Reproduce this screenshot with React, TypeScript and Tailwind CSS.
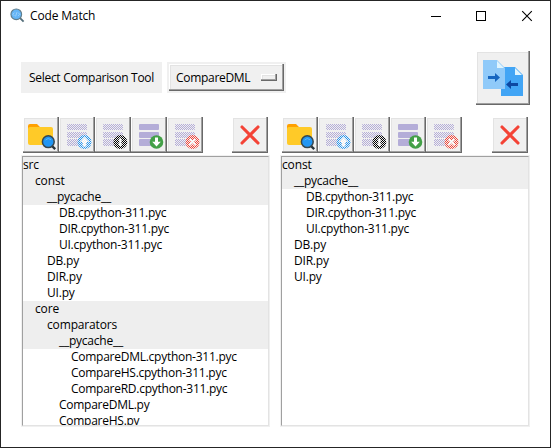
import type { ReactNode } from "react";

const raised =
  "shrink-0 bg-[#f0f0f0] border-r border-b border-[#696969] shadow-[inset_-1px_-1px_0_#a0a0a0,inset_1px_1px_0_#fff,inset_2px_2px_0_#e3e3e3]";

function ToolButton({ children, disabled }: { children: ReactNode; disabled?: boolean }) {
  return (
    <button className={`${raised} block h-9 w-9 overflow-hidden`}>
      <svg width="35" height="35" viewBox="0 0 35 35" className="block">
        {children}
        {disabled && <rect x="4" y="4" width="29" height="29" fill="url(#stipple)" />}
      </svg>
    </button>
  );
}

function Bars() {
  return (
    <g fill="#b4add8">
      <rect x="8" y="7" width="20" height="6" rx="1" />
      <rect x="8" y="15" width="20" height="6" rx="1" />
      <rect x="8" y="22" width="20" height="7" rx="1" />
    </g>
  );
}

function FolderIcon() {
  return (
    <>
      <path d="M5 9q0-2 2-2h7l3 3h10v6H5z" fill="#ffa000" />
      <path d="M5 12q0-2 2-2h21q2 0 2 2V26q0 2-2 2H7q-2 0-2-2z" fill="#ffca28" />
      <path d="M29 29l3.2 3.2" stroke="#263238" strokeWidth="2.4" />
      <circle cx="25.3" cy="24.7" r="5.9" fill="#2196f3" stroke="#37474f" strokeWidth="1.5" />
      <path d="M22.5 23a4 4 0 0 1 5.5-.3" stroke="#64b5f6" strokeWidth="1" fill="none" />
    </>
  );
}

function CloseIcon() {
  return <path d="M10 10l16 16M26 10L10 26" stroke="#f44336" strokeWidth="3.1" strokeLinecap="round" />;
}

function Toolbar() {
  return (
    <div className="flex h-9 pl-0.5">
      <ToolButton><FolderIcon /></ToolButton>
      <ToolButton disabled>
        <Bars />
        <circle cx="25.5" cy="25" r="7" fill="#2196f3" />
        <path d="M25.5 20l4.5 5h-2.7v4.5h-3.6V25H21z" fill="#fff" />
      </ToolButton>
      <ToolButton disabled>
        <Bars />
        <circle cx="25.3" cy="25" r="7" fill="#000" />
        <path d="M25.3 20.5l2.2 3h-1.2v3h1.2l-2.2 3-2.2-3h1.2v-3h-1.2z" fill="#fff" />
      </ToolButton>
      <ToolButton>
        <Bars />
        <circle cx="25.5" cy="25" r="6.8" fill="#43a047" />
        <path d="M24 20.5h3v4.2h2.8L25.5 29.5l-4.3-4.8H24z" fill="#fff" />
      </ToolButton>
      <ToolButton disabled>
        <Bars />
        <circle cx="25.5" cy="25" r="7" fill="#f44336" />
        <path d="M22.5 22l6 6M28.5 22l-6 6" stroke="#fff" strokeWidth="2" />
      </ToolButton>
      <div className="mr-0.5 ml-auto"><ToolButton><CloseIcon /></ToolButton></div>
    </div>
  );
}

type Row = { text: string; depth: number; dir?: boolean };

const leftRows: Row[] = [
  { text: "src", depth: 0, dir: true },
  { text: "const", depth: 1, dir: true },
  { text: "__pycache__", depth: 2, dir: true },
  { text: "DB.cpython-311.pyc", depth: 3 },
  { text: "DIR.cpython-311.pyc", depth: 3 },
  { text: "UI.cpython-311.pyc", depth: 3 },
  { text: "DB.py", depth: 2 },
  { text: "DIR.py", depth: 2 },
  { text: "UI.py", depth: 2 },
  { text: "core", depth: 1, dir: true },
  { text: "comparators", depth: 2, dir: true },
  { text: "__pycache__", depth: 3, dir: true },
  { text: "CompareDML.cpython-311.pyc", depth: 4 },
  { text: "CompareHS.cpython-311.pyc", depth: 4 },
  { text: "CompareRD.cpython-311.pyc", depth: 4 },
  { text: "CompareDML.py", depth: 3 },
  { text: "CompareHS.py", depth: 3 },
];

const rightRows: Row[] = [
  { text: "const", depth: 0, dir: true },
  { text: "__pycache__", depth: 1, dir: true },
  { text: "DB.cpython-311.pyc", depth: 2 },
  { text: "DIR.cpython-311.pyc", depth: 2 },
  { text: "UI.cpython-311.pyc", depth: 2 },
  { text: "DB.py", depth: 1 },
  { text: "DIR.py", depth: 1 },
  { text: "UI.py", depth: 1 },
];

const indent = ["pl-0", "pl-3", "pl-6", "pl-9", "pl-12"];

function tracking(text: string) {
  if (text.startsWith("Compare")) return "tracking-[-0.26px]";
  if (text.endsWith(".pyc")) return "tracking-[-0.24px]";
  if (text.endsWith(".py")) return "tracking-[-0.2px]";
  if (text === "__pycache__") return "tracking-[-0.25px]";
  return "tracking-[-0.15px]";
}

function Tree({ rows }: { rows: Row[] }) {
  return (
    <div className="mt-0.5 h-[272px] border border-[#f0f0f0]">
      <div className="h-full overflow-hidden border border-t-[#a0a0a0] border-r-[#e3e3e3] border-b-[#e3e3e3] border-l-[#a0a0a0]">
        {rows.map((r, i) => (
          <div
            key={i}
            className={`h-4 leading-4 whitespace-nowrap ${indent[r.depth]} ${r.dir ? "bg-[#eeeeee]" : "bg-white"} ${tracking(r.text)}`}
          >
            {r.text}
          </div>
        ))}
      </div>
    </div>
  );
}

export default function App() {
  return (
    <div className="flex h-[448px] w-[551px] flex-col overflow-hidden border border-[#252525] bg-white font-['Open_Sans','Noto_Sans',sans-serif] text-[12px] text-black">
      <svg width="0" height="0" className="absolute">
        <pattern id="stipple" width="2" height="2" patternUnits="userSpaceOnUse">
          <rect width="1" height="1" fill="#f0f0f0" />
          <rect x="1" y="1" width="1" height="1" fill="#f0f0f0" />
        </pattern>
      </svg>
      <header className="flex h-[29px] items-center pl-[9px]">
        <svg width="15" height="15" viewBox="0 0 16 16">
          <path d="M10.5 10.5l4 4" stroke="#546e7a" strokeWidth="2" />
          <circle cx="6.7" cy="6.7" r="5.7" fill="#64b5f6" stroke="#607d8b" strokeWidth="1.2" />
          <path d="M4.7 5L3 6.7l1.7 1.7M8.7 5l1.7 1.7-1.7 1.7M7.3 4.5L6 9" stroke="#a5d4fa" strokeWidth=".9" fill="none" />
        </svg>
        <h1 className="ml-[5px] tracking-[-0.15px]">Code Match</h1>
        <svg width="104" height="12" viewBox="0 0 104 12" className="mr-[16px] ml-auto" fill="none" stroke="#000">
          <path d="M1 6.5h10" />
          <rect x="46.5" y="1.5" width="9" height="9" />
          <path d="M92.2 1.2l9.6 9.6M101.8 1.2l-9.6 9.6" strokeWidth="1.1" />
        </svg>
      </header>
      <div className="flex h-[87px] pt-[21px] pl-5">
        <div className="mt-[11px] flex h-[31px] w-[141px] items-center bg-[#f0f0f0] pl-2 tracking-[-0.3px] whitespace-nowrap">
          Select Comparison Tool
        </div>
        <div className="mt-[11px] ml-[5px] h-[31px] w-[119px] bg-[#f0f0f0] p-0.5">
          <button className={`${raised} flex h-[27px] w-[115px] items-center justify-between pr-1.5 pb-px pl-[7px]`}>
            <span className="mt-0.5 tracking-[-0.3px]">CompareDML</span>
            <span className={`${raised} mt-0.5 block h-[7px] w-4`} />
          </button>
        </div>
        <button className={`${raised} mr-5 ml-auto block h-[54px] w-[54px]`}>
          <svg width="53" height="53" viewBox="0 0 53 53" className="block">
            <path d="M25 16h14l8 8v21H25z" fill="#42a5f5" />
            <path d="M39 17v7h7z" fill="#e1f5fe" />
            <path d="M7 9h14l8 8v21H7z" fill="#90caf9" />
            <path d="M21 10v7h7z" fill="#e1f5fe" />
            <path d="M12 25h7v-3l5 4.5-5 4.5v-3h-7z" fill="#1565c0" />
            <path d="M42 32h-7v-3l-5 4.5 5 4.5v-3h7z" fill="#0d47a1" />
          </svg>
        </button>
      </div>
      <main className="flex justify-between pr-5 pl-5">
        <section className="w-[249px]"><Toolbar /><Tree rows={leftRows} /></section>
        <section className="w-[250px]"><Toolbar /><Tree rows={rightRows} /></section>
      </main>
    </div>
  );
}
